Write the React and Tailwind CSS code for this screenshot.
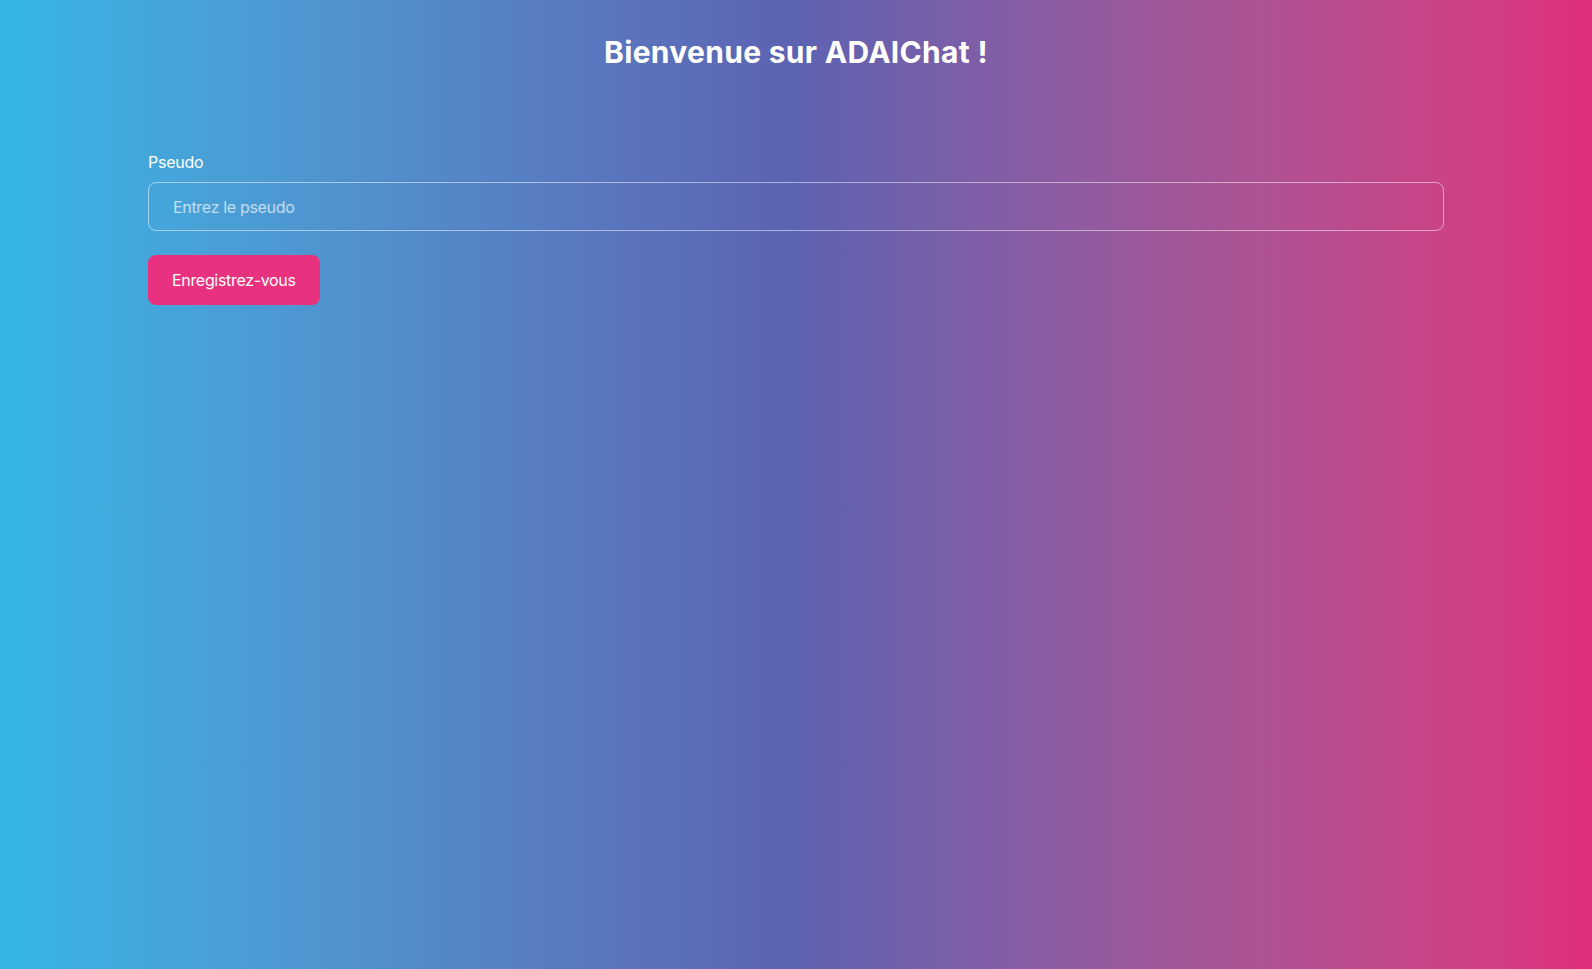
export default function App() {
  return (
    <div
      className="min-h-screen w-full bg-linear-to-r from-[#33b6e4] via-[#5c62b2] to-[#e02e7c] text-white"
      style={{ minHeight: '969px' }}
    >
      <div className="font-['Inter',sans-serif]">
        <h1 className="pt-[34px] text-center text-[30px] leading-9 font-bold tracking-[0.01em]">
          Bienvenue sur ADAIChat !
        </h1>

        <div className="mx-auto mt-[80px] max-w-[1320px] px-3">
          <label
            htmlFor="pseudo"
            className="mb-2 block text-base leading-6 font-normal tracking-[-0.015em]"
          >
            Pseudo
          </label>
          <input
            id="pseudo"
            type="text"
            placeholder="Entrez le pseudo"
            className="block h-[49px] w-full rounded-lg border border-white/50 bg-transparent px-6 text-base tracking-[-0.02em] text-white outline-none placeholder:text-white/65"
          />
          <button
            type="button"
            className="mt-6 h-[50px] rounded-lg bg-[#e8327f] px-6 text-base font-normal tracking-[-0.02em] text-white"
          >
            Enregistrez-vous
          </button>
        </div>
      </div>
    </div>
  )
}
